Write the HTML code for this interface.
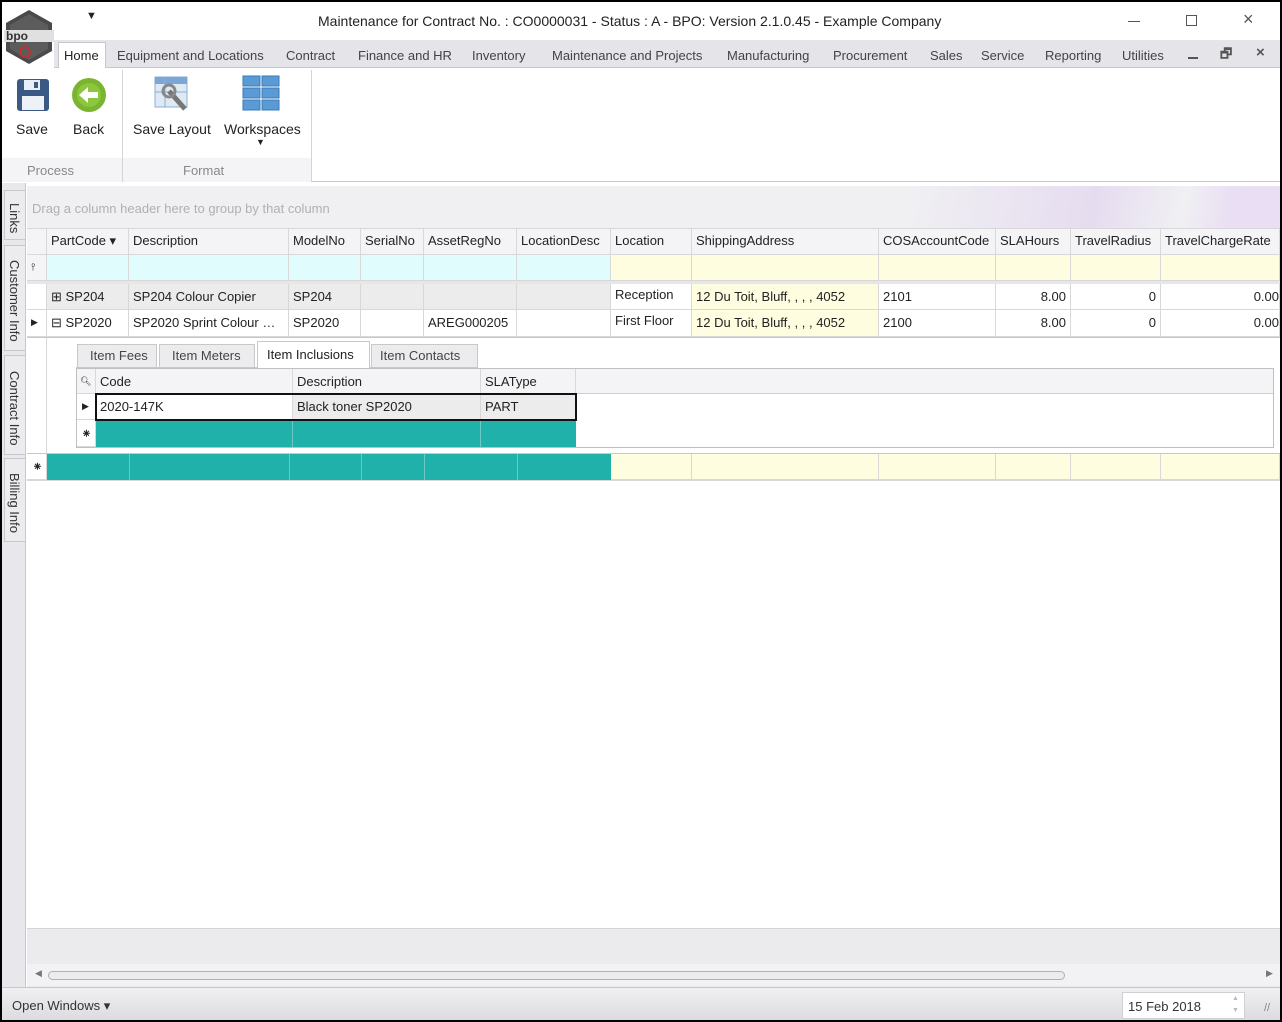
<!DOCTYPE html>
<html><head><meta charset="utf-8">
<style>
*{box-sizing:border-box;margin:0;padding:0}
body{width:1282px;height:1022px;position:relative;background:#000;font-family:"Liberation Sans",sans-serif;font-size:13px;color:#222;overflow:hidden}
.a{position:absolute}
.win{position:absolute;left:2px;top:2px;width:1278px;height:1018px;background:#fff;overflow:hidden}
.t{white-space:nowrap;position:absolute}
.c{position:absolute;border-right:1px solid #d8d8d8;border-bottom:1px solid #d8d8d8;white-space:nowrap;overflow:hidden;padding:0 4px;line-height:25px}
.vt{position:absolute;writing-mode:vertical-rl;font-size:13px;color:#333;background:#ececef;border:1px solid #c8c8cc;left:2px;width:22px;display:flex;align-items:flex-start;justify-content:center;padding-top:6px;line-height:22px}
</style></head><body>
<div class="win">
<!-- title bar -->
<div class="a" style="left:0;top:0;width:1278px;height:38px;background:#fff"></div>
<svg class="a" style="left:0;top:6px" width="54" height="60" viewBox="0 0 54 60">
<polygon points="27,2 50,15 50,43 27,56 4,43 4,15" fill="#4a4a4a"/>
<polygon points="27,6 46,17 46,41 27,52 8,41 8,17" fill="#5c5c5c"/>
<rect x="2" y="22" width="50" height="12" fill="#e0e0e0"/>
<text x="4" y="32" font-size="12" font-family="Liberation Sans" fill="#333" font-weight="bold">bpo</text>
<circle cx="23" cy="44" r="5" fill="none" stroke="#c03030" stroke-width="2"/>
</svg>
<div class="t" style="left:84px;top:8px;font-size:11px">▼</div>
<div class="t" style="left:316px;top:11px;font-size:14px;color:#222">Maintenance for Contract No. : CO0000031 - Status : A - BPO: Version 2.1.0.45 - Example Company</div>
<div class="a" style="left:1126px;top:19px;width:12px;height:1px;background:#555"></div>
<div class="a" style="left:1184px;top:13px;width:11px;height:11px;border:1px solid #555"></div>
<div class="t" style="left:1241px;top:7px;font-size:18px;color:#555">×</div>
<!-- tab bar -->
<div class="a" style="left:52px;top:38px;width:1226px;height:28px;background:#e4e4e9;border-bottom:1px solid #c6c6cc"></div>
<div class="a" style="left:56px;top:40px;width:48px;height:27px;background:#fff;border:1px solid #c6c6cc;border-bottom:none"></div>
<div class="t" style="left:62px;top:46px;color:#222">Home</div>
<div class="t" style="left:115px;top:46px;color:#444">Equipment and Locations</div>
<div class="t" style="left:284px;top:46px;color:#444">Contract</div>
<div class="t" style="left:356px;top:46px;color:#444">Finance and HR</div>
<div class="t" style="left:470px;top:46px;color:#444">Inventory</div>
<div class="t" style="left:550px;top:46px;color:#444">Maintenance and Projects</div>
<div class="t" style="left:725px;top:46px;color:#444">Manufacturing</div>
<div class="t" style="left:831px;top:46px;color:#444">Procurement</div>
<div class="t" style="left:928px;top:46px;color:#444">Sales</div>
<div class="t" style="left:979px;top:46px;color:#444">Service</div>
<div class="t" style="left:1043px;top:46px;color:#444">Reporting</div>
<div class="t" style="left:1120px;top:46px;color:#444">Utilities</div>
<div class="a" style="left:1186px;top:55px;width:10px;height:2px;background:#555"></div>
<div class="t" style="left:1218px;top:43px;font-size:13px;color:#555;font-weight:bold">🗗</div>
<div class="t" style="left:1254px;top:42px;font-size:15px;color:#555;font-weight:bold">×</div>
<!-- ribbon -->
<div class="a" style="left:0;top:66px;width:1278px;height:114px;background:#fff;border-bottom:1px solid #c6c6cc"></div>
<div class="a" style="left:0;top:156px;width:120px;height:24px;background:#f4f4f6"></div>
<div class="a" style="left:121px;top:156px;width:188px;height:24px;background:#f4f4f6"></div>
<div class="a" style="left:120px;top:68px;width:1px;height:112px;background:#d4d4d8"></div>
<div class="a" style="left:309px;top:68px;width:1px;height:112px;background:#d4d4d8"></div>
<svg class="a" style="left:14px;top:76px" width="34" height="34"><rect x="1" y="1" width="32" height="32" rx="3" fill="#3a5a85"/><rect x="8" y="2" width="16" height="10" fill="#e8eef5"/><rect x="18" y="4" width="4" height="6" fill="#3a5a85"/><rect x="6" y="18" width="22" height="14" fill="#eef2f6"/></svg>
<svg class="a" style="left:69px;top:75px" width="36" height="36"><circle cx="18" cy="18" r="17" fill="#7ab530"/><circle cx="18" cy="18" r="12" fill="#8cc63f"/><path d="M8 18 L17 10 L17 15 L27 15 L27 21 L17 21 L17 26 Z" fill="#fff"/></svg>
<div class="t" style="left:14px;top:119px;font-size:14px">Save</div>
<div class="t" style="left:71px;top:119px;font-size:14px">Back</div>
<svg class="a" style="left:151px;top:73px" width="40" height="40"><rect x="2" y="2" width="32" height="30" fill="#dfe9f4" stroke="#8aaed4"/><rect x="2" y="2" width="32" height="7" fill="#7aa7d8"/><line x1="12" y1="2" x2="12" y2="32" stroke="#8aaed4"/><line x1="2" y1="17" x2="34" y2="17" stroke="#8aaed4"/><path d="M16 16 L32 34" stroke="#777" stroke-width="5"/><circle cx="16" cy="16" r="6" fill="none" stroke="#888" stroke-width="3"/></svg>
<svg class="a" style="left:240px;top:73px" width="38" height="38"><g fill="#5b9bd5" stroke="#3a78b8"><rect x="1" y="1" width="17" height="10"/><rect x="20" y="1" width="17" height="10"/><rect x="1" y="13" width="17" height="10"/><rect x="20" y="13" width="17" height="10"/><rect x="1" y="25" width="17" height="10"/><rect x="20" y="25" width="17" height="10"/></g></svg>
<div class="t" style="left:131px;top:119px;font-size:14px">Save Layout</div>
<div class="t" style="left:222px;top:119px;font-size:14px">Workspaces</div>
<div class="t" style="left:254px;top:135px;font-size:9px">▼</div>
<div class="t" style="left:25px;top:161px;color:#888">Process</div>
<div class="t" style="left:181px;top:161px;color:#888">Format</div>
<!-- left strip -->
<div class="a" style="left:0;top:181px;width:24px;height:804px;background:#e8e8ec;border-right:1px solid #c8c8cc"></div>
<div class="vt" style="top:188px;height:50px">Links</div>
<div class="vt" style="top:243px;height:106px">Customer Info</div>
<div class="vt" style="top:353px;height:100px">Contract Info</div>
<div class="vt" style="top:456px;height:84px">Billing Info</div>
<!-- grid area -->
<div class="a" style="left:25px;top:184px;width:1253px;height:42px;background:linear-gradient(100deg,#f0f0f3 70%,#e6dcf0 85%,#f0f0f3 92%,#e9def3 96%)"></div>
<div class="t" style="left:30px;top:199px;color:#b0b0b4">Drag a column header here to group by that column</div>
<!-- header -->
<div class="a" style="left:25px;top:226px;width:1253px;height:27px;background:#f4f4f6;border-top:1px solid #d8d8d8;border-bottom:1px solid #d0d0d0"></div>
<div class="c" style="left:25px;top:226px;width:20px;height:27px"></div>
<div class="c" style="left:45px;top:226px;width:82px;height:27px">PartCode ▾</div>
<div class="c" style="left:127px;top:226px;width:160px;height:27px">Description</div>
<div class="c" style="left:287px;top:226px;width:72px;height:27px">ModelNo</div>
<div class="c" style="left:359px;top:226px;width:63px;height:27px">SerialNo</div>
<div class="c" style="left:422px;top:226px;width:93px;height:27px">AssetRegNo</div>
<div class="c" style="left:515px;top:226px;width:94px;height:27px">LocationDesc</div>
<div class="c" style="left:609px;top:226px;width:81px;height:27px">Location</div>
<div class="c" style="left:690px;top:226px;width:187px;height:27px">ShippingAddress</div>
<div class="c" style="left:877px;top:226px;width:117px;height:27px">COSAccountCode</div>
<div class="c" style="left:994px;top:226px;width:75px;height:27px">SLAHours</div>
<div class="c" style="left:1069px;top:226px;width:90px;height:27px">TravelRadius</div>
<div class="c" style="left:1159px;top:226px;width:119px;height:27px">TravelChargeRate</div>
<!-- filter row -->
<div class="c" style="left:25px;top:253px;width:20px;height:26px;background:#f4f4f6;font-size:10px">⫯</div>
<div class="a" style="left:45px;top:253px;width:564px;height:26px;background:#e0fcfc"></div>
<div class="a" style="left:609px;top:253px;width:669px;height:26px;background:#fffde0"></div>
<div class="c" style="left:45px;top:253px;width:82px;height:26px"></div><div class="c" style="left:127px;top:253px;width:160px;height:26px"></div><div class="c" style="left:287px;top:253px;width:72px;height:26px"></div><div class="c" style="left:359px;top:253px;width:63px;height:26px"></div><div class="c" style="left:422px;top:253px;width:93px;height:26px"></div><div class="c" style="left:515px;top:253px;width:94px;height:26px"></div><div class="c" style="left:609px;top:253px;width:81px;height:26px"></div><div class="c" style="left:690px;top:253px;width:187px;height:26px"></div><div class="c" style="left:877px;top:253px;width:117px;height:26px"></div><div class="c" style="left:994px;top:253px;width:75px;height:26px"></div><div class="c" style="left:1069px;top:253px;width:90px;height:26px"></div><div class="c" style="left:1159px;top:253px;width:119px;height:26px"></div>
<div class="a" style="left:25px;top:279px;width:1253px;height:3px;background:#e6e6e8"></div>
<!-- row 1 -->
<div class="a" style="left:45px;top:282px;width:564px;height:26px;background:#ececec"></div>
<div class="a" style="left:690px;top:282px;width:187px;height:53px;background:#fffde0"></div>
<div class="c" style="left:25px;top:282px;width:20px;height:26px"></div>
<div class="c" style="left:45px;top:282px;width:82px;height:26px">⊞ SP204</div>
<div class="c" style="left:127px;top:282px;width:160px;height:26px">SP204 Colour Copier</div>
<div class="c" style="left:287px;top:282px;width:72px;height:26px">SP204</div>
<div class="c" style="left:359px;top:282px;width:63px;height:26px"></div>
<div class="c" style="left:422px;top:282px;width:93px;height:26px"></div>
<div class="c" style="left:515px;top:282px;width:94px;height:26px"></div>
<div class="c" style="left:609px;top:282px;width:81px;height:26px;line-height:22px">Reception</div>
<div class="c" style="left:690px;top:282px;width:187px;height:26px">12 Du Toit, Bluff, , , , 4052</div>
<div class="c" style="left:877px;top:282px;width:117px;height:26px">2101</div>
<div class="c" style="left:994px;top:282px;width:75px;height:26px;text-align:right">8.00</div>
<div class="c" style="left:1069px;top:282px;width:90px;height:26px;text-align:right">0</div>
<div class="c" style="left:1159px;top:282px;width:119px;height:26px;text-align:right;padding-right:0">0.00</div>
<!-- row 2 -->
<div class="c" style="left:25px;top:308px;width:20px;height:27px;font-size:9px">▶</div>
<div class="c" style="left:45px;top:308px;width:82px;height:27px">⊟ SP2020</div>
<div class="c" style="left:127px;top:308px;width:160px;height:27px">SP2020 Sprint Colour …</div>
<div class="c" style="left:287px;top:308px;width:72px;height:27px">SP2020</div>
<div class="c" style="left:359px;top:308px;width:63px;height:27px"></div>
<div class="c" style="left:422px;top:308px;width:93px;height:27px">AREG000205</div>
<div class="c" style="left:515px;top:308px;width:94px;height:27px"></div>
<div class="c" style="left:609px;top:308px;width:81px;height:27px;line-height:22px">First Floor</div>
<div class="c" style="left:690px;top:308px;width:187px;height:27px">12 Du Toit, Bluff, , , , 4052</div>
<div class="c" style="left:877px;top:308px;width:117px;height:27px">2100</div>
<div class="c" style="left:994px;top:308px;width:75px;height:27px;text-align:right">8.00</div>
<div class="c" style="left:1069px;top:308px;width:90px;height:27px;text-align:right">0</div>
<div class="c" style="left:1159px;top:308px;width:119px;height:27px;text-align:right;padding-right:0">0.00</div>
<div class="a" style="left:25px;top:335px;width:1253px;height:1px;background:#c8c8c8"></div>
<!-- detail -->
<div class="a" style="left:25px;top:336px;width:20px;height:115px;border-right:1px solid #d8d8d8"></div>
<div class="a" style="left:74px;top:340px;width:402px;height:26px;border-bottom:1px solid #c8c8c8"></div>
<div class="a" style="left:75px;top:342px;width:80px;height:24px;background:#ececef;border:1px solid #c8c8c8"></div>
<div class="t" style="left:88px;top:346px;color:#444">Item Fees</div>
<div class="a" style="left:157px;top:342px;width:96px;height:24px;background:#ececef;border:1px solid #c8c8c8"></div>
<div class="t" style="left:170px;top:346px;color:#444">Item Meters</div>
<div class="a" style="left:255px;top:339px;width:113px;height:28px;background:#fff;border:1px solid #c8c8c8;border-bottom:none"></div>
<div class="t" style="left:265px;top:345px">Item Inclusions</div>
<div class="a" style="left:369px;top:342px;width:107px;height:24px;background:#ececef;border:1px solid #c8c8c8"></div>
<div class="t" style="left:378px;top:346px;color:#444">Item Contacts</div>
<div class="a" style="left:74px;top:366px;width:1198px;height:80px;border:1px solid #c0c0c0;background:#fff"></div>
<div class="a" style="left:75px;top:367px;width:1196px;height:25px;background:#f4f4f6;border-bottom:1px solid #d0d0d0"></div>
<div class="c" style="left:75px;top:367px;width:19px;height:25px;font-size:9px;padding:0 3px">🔍︎</div>
<div class="c" style="left:94px;top:367px;width:197px;height:25px">Code</div>
<div class="c" style="left:291px;top:367px;width:188px;height:25px">Description</div>
<div class="c" style="left:479px;top:367px;width:95px;height:25px">SLAType</div>
<div class="c" style="left:75px;top:392px;width:19px;height:26px;font-size:9px;padding:0 5px">▶</div>
<div class="c" style="left:94px;top:392px;width:197px;height:26px;background:#fff">2020-147K</div>
<div class="c" style="left:291px;top:392px;width:188px;height:26px;background:#ececec">Black toner SP2020</div>
<div class="c" style="left:479px;top:392px;width:95px;height:26px;background:#ececec">PART</div>
<div class="a" style="left:93px;top:391px;width:482px;height:28px;border:2px solid #111"></div>
<div class="c" style="left:75px;top:419px;width:19px;height:26px;padding:0 4px">⁕</div>
<div class="a" style="left:94px;top:419px;width:480px;height:26px;background:#20b2aa"></div>
<div class="a" style="left:290px;top:419px;width:1px;height:26px;background:#6ccac4"></div>
<div class="a" style="left:478px;top:419px;width:1px;height:26px;background:#6ccac4"></div>
<!-- new row -->
<div class="a" style="left:25px;top:451px;width:1253px;height:1px;background:#c8c8c8"></div>
<div class="c" style="left:25px;top:452px;width:20px;height:26px;padding:0 5px">⁕</div>
<div class="a" style="left:45px;top:452px;width:564px;height:26px;background:#20b2aa"></div>
<div class="a" style="left:609px;top:452px;width:669px;height:26px;background:#fffde0"></div>
<div class="a" style="left:127px;top:452px;width:1px;height:26px;background:#6ccac4"></div>
<div class="a" style="left:287px;top:452px;width:1px;height:26px;background:#6ccac4"></div>
<div class="a" style="left:359px;top:452px;width:1px;height:26px;background:#6ccac4"></div>
<div class="a" style="left:422px;top:452px;width:1px;height:26px;background:#6ccac4"></div>
<div class="a" style="left:515px;top:452px;width:1px;height:26px;background:#6ccac4"></div>
<div class="c" style="left:609px;top:452px;width:81px;height:26px"></div><div class="c" style="left:690px;top:452px;width:187px;height:26px"></div><div class="c" style="left:877px;top:452px;width:117px;height:26px"></div><div class="c" style="left:994px;top:452px;width:75px;height:26px"></div><div class="c" style="left:1069px;top:452px;width:90px;height:26px"></div><div class="c" style="left:1159px;top:452px;width:119px;height:26px"></div>
<div class="a" style="left:25px;top:478px;width:1253px;height:1px;background:#d8d8d8"></div>
<!-- bottom -->
<div class="a" style="left:25px;top:926px;width:1253px;height:59px;background:#ebebee;border-top:1px solid #d4d4d8"></div>
<div class="a" style="left:25px;top:962px;width:1253px;height:22px;background:#f2f2f4"></div>
<div class="t" style="left:33px;top:966px;font-size:9px;color:#777">◀</div>
<div class="a" style="left:46px;top:969px;width:1017px;height:9px;border:1px solid #b0b0b4;border-radius:5px;background:#ececef"></div>
<div class="t" style="left:1264px;top:966px;font-size:9px;color:#777">▶</div>
<div class="a" style="left:0;top:985px;width:1278px;height:33px;background:linear-gradient(#f0f0f2,#dcdce0);border-top:1px solid #c8c8cc"></div>
<div class="t" style="left:10px;top:996px;color:#333">Open Windows ▾</div>
<div class="a" style="left:1120px;top:990px;width:123px;height:27px;background:#fff;border:1px solid #d0d0d4"></div>
<div class="t" style="left:1126px;top:997px;color:#333">15 Feb 2018</div>
<div class="t" style="left:1230px;top:991px;font-size:7px;color:#bbb;line-height:12px">▲<br>▼</div>
<div class="t" style="left:1262px;top:1000px;font-size:11px;color:#888">//</div>
</div>
</body></html>
